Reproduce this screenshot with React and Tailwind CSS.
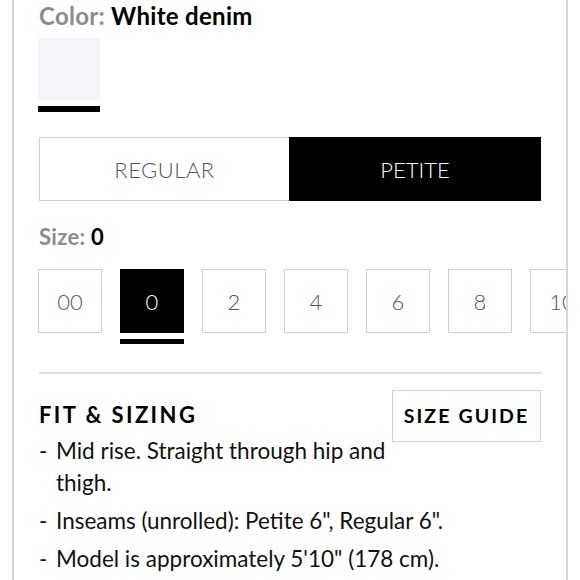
import React from 'react';

const sizes = ['00', '0', '2', '4', '6', '8', '10'];

export default function App() {
  const selected = '0';
  return (
    <div className="w-[580px] h-[580px] overflow-hidden bg-white" style={{ fontFamily: 'Lato, "Noto Sans", sans-serif' }}>
      <div className="ml-[12px] w-[556px] h-[580px] border-x-2 border-[#d6d6d6] pl-[25px] overflow-hidden">
        <div className="mt-[1px] text-[24px] font-bold leading-[30px] tracking-[0.3px]">
          <span className="text-[#8c8c8c]">Color: </span>
          <span className="text-black">White denim</span>
        </div>

        <div className="mt-[7px] -ml-[1px] w-[62px]">
          <div className="w-[62px] h-[62px] bg-[#f3f5f9]" />
          <div className="mt-[6px] h-[6px] bg-black" />
        </div>

        <div className="mt-[25px] w-[502px] h-[64px] flex">
          <button className="w-[250px] border border-[#cfcfcf] border-r-0 text-[22px] font-light text-[#555] tracking-[0.5px]">
            REGULAR
          </button>
          <button className="flex-1 bg-black text-white text-[22px] font-light">
            PETITE
          </button>
        </div>

        <div className="mt-[22px] text-[22px] font-bold leading-[28px] tracking-[0.3px]">
          <span className="text-[#8c8c8c]">Size: </span>
          <span className="text-black">0</span>
        </div>

        <div className="mt-[18px] -ml-[1px] flex gap-[18px] w-[600px]">
          {sizes.map((s) => (
            <div key={s} className="w-[64px] shrink-0">
              <div
                className={
                  s === selected
                    ? 'w-[64px] h-[64px] flex items-center justify-center bg-black text-white text-[22px] font-light'
                    : 'w-[64px] h-[64px] flex items-center justify-center border border-[#cfcfcf] text-[#555] text-[22px] font-light'
                }
              >
                {s}
              </div>
              {s === selected && <div className="mt-[6px] h-[5px] bg-black" />}
            </div>
          ))}
        </div>

        <div className="mt-[28px] w-[502px] border-t-2 border-[#dcdcdc]" />

        <div className="mt-[16px] w-[502px] flex justify-between items-start">
          <div className="mt-[12px] text-[22px] font-bold tracking-[2.4px] text-black leading-[26px]">
            FIT &amp; SIZING
          </div>
          <button className="w-[149px] h-[52px] border border-[#cfcfcf] text-[19.5px] font-bold tracking-[2.1px] text-black">
            SIZE GUIDE
          </button>
        </div>

        <ul className="mt-[-7px] w-[420px] text-[22.5px] text-[#111] leading-[32px] flex flex-col gap-[6px]">
          <li className="flex">
            <span className="w-[17px] shrink-0">-</span>
            <span className="w-[340px]">Mid rise. Straight through hip and thigh.</span>
          </li>
          <li className="flex">
            <span className="w-[17px] shrink-0">-</span>
            <span>Inseams (unrolled): Petite 6", Regular 6".</span>
          </li>
          <li className="flex">
            <span className="w-[17px] shrink-0">-</span>
            <span>Model is approximately 5'10" (178 cm).</span>
          </li>
        </ul>
      </div>
    </div>
  );
}
